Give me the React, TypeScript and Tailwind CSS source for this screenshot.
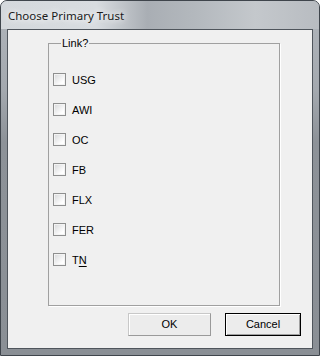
import React from "react";

const trusts = ["USG", "AWI", "OC", "FB", "FLX", "FER", "TN"];

const Check: React.FC<{ label: string }> = ({ label }) => {
  const [checked, setChecked] = React.useState(false);
  return (
    <label className="flex items-center gap-[6px] h-[13px] cursor-default" onClick={() => setChecked(!checked)}>
      <span className="w-[13px] h-[13px] shrink-0 border border-[#8e8f8f] bg-[linear-gradient(135deg,#d6d7d9,#ffffff_75%)] shadow-[inset_0_0_0_1px_#f3f3f3] flex items-center justify-center text-[10px] leading-none">
        {checked ? "✓" : ""}
      </span>
      <span className="pt-[1px]">
        {label === "TN" ? (
          <>
            T<span className="underline underline-offset-2">N</span>
          </>
        ) : (
          label
        )}
      </span>
    </label>
  );
};

export default function App() {
  return (
    <div className="w-[320px] h-[356px] flex flex-col rounded-t-[7px] border border-[#3f454c] bg-[linear-gradient(180deg,#b0b5bb_0%,#a4a9af_25%,#8d9298_40%,#8a8f95_100%)] overflow-hidden font-['Liberation_Sans',Arial,sans-serif] text-[11px] text-black">
      <div className="h-[28px] shrink-0 flex items-center pl-[7px] pt-[1px] bg-[linear-gradient(90deg,#d4d8dc_0%,#d8dce0_30%,#a9aeb4_46%,#b4b9be_62%,#c4c8cc_80%,#b8bcc1_100%)]">
        <span className="font-['Noto_Sans',sans-serif] text-[11.5px] text-[#1a1a1a] [text-shadow:0_0_6px_#ffffff,0_0_10px_#ffffff]">
          Choose Primary Trust
        </span>
      </div>
      <div className="flex-1 mx-[6px] mb-[6px] border border-[#4f555c] bg-[#f0f0f0] flex flex-col pt-[7px]">
        <fieldset className="ml-[40px] w-[232px] h-[269px] border border-[#a0a0a0] shadow-[1px_1px_0_#ffffff] pl-[4px] pt-[23px]">
          <legend className="ml-[8px] px-[1px] leading-[13px]">Link?</legend>
          <div className="flex flex-col gap-[17px]">
            {trusts.map((t) => (
              <Check key={t} label={t} />
            ))}
          </div>
        </fieldset>
        <div className="flex justify-end gap-[14px] pr-[11px] mt-[7px]">
          <button className="w-[83px] h-[23px] border border-[#c8c8c8] border-r-[#9a9a9a] border-b-[#9a9a9a] bg-[#ececec] shadow-[inset_1px_1px_0_#ffffff]">
            OK
          </button>
          <button className="w-[76px] h-[23px] border border-black bg-[#ececec] shadow-[inset_1px_1px_0_#ffffff,inset_-1px_-1px_0_#a0a0a0]">
            Cancel
          </button>
        </div>
      </div>
    </div>
  );
}
